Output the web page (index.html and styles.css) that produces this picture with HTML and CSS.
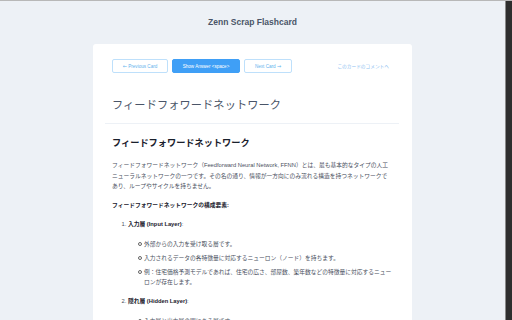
FILE: index.html
```html
<!DOCTYPE html>
<html lang="ja">
<head>
  <meta charset="UTF-8" />
  <title>Zenn Scrap Flashcard</title>
  <link rel="stylesheet" href="styles.css">
</head>
<body>
  <div class="page">
    <h1 class="site-title">Zenn Scrap Flashcard</h1>
    <main class="card">
      <header class="card-head">
        <nav class="actions">
          <button class="btn"><span class="arrow">←</span> Previous Card</button>
          <button class="btn btn-primary">Show Answer &lt;space&gt;</button>
          <button class="btn btn-next">Next Card <span class="arrow">→</span></button>
          <a class="comment-link" href="#">このカードのコメントへ</a>
        </nav>
        <h2 class="card-title">フィードフォワードネットワーク</h2>
      </header>
      <article class="card-body">
        <h3>フィードフォワードネットワーク</h3>
        <p>フィードフォワードネットワーク（Feedforward Neural Network, FFNN）とは、最も基本的なタイプの人工ニューラルネットワークの一つです。その名の通り、情報が一方向にのみ流れる構造を持つネットワークであり、ループやサイクルを持ちません。</p>
        <p class="lead"><strong>フィードフォワードネットワークの構成要素:</strong></p>
        <ol>
          <li>
            <strong>入力層 (Input Layer)</strong>:
            <ul>
              <li>外部からの入力を受け取る層です。</li>
              <li>入力されるデータの各特徴量に対応するニューロン（ノード）を持ちます。</li>
              <li>例：住宅価格予測モデルであれば、住宅の広さ、部屋数、築年数などの特徴量に対応するニューロンが存在します。</li>
            </ul>
          </li>
          <li>
            <strong>隠れ層 (Hidden Layer)</strong>:
            <ul>
              <li>入力層と出力層の間にある層です。</li>
            </ul>
          </li>
        </ol>
      </article>
    </main>
  </div>
  <div class="scrollbar"></div>
</body>
</html>
```

FILE: styles.css
```css
body {
  margin: 0;
  height: 320px;
  overflow: hidden;
  display: flex;
  background: #edf1f6;
  border-top: 1px solid #b8b8b8;
  box-sizing: border-box;
  font-family: "Liberation Sans", "Noto Sans CJK JP", sans-serif;
  color: #4a5568;
}
.page {
  flex: 1;
  display: flex;
  flex-direction: column;
  align-items: center;
}
.scrollbar {
  width: 6px;
  background: #2e2e2e;
  border-left: 1px solid #8a8a8a;
}
.site-title {
  margin: 0;
  height: 43px;
  line-height: 43px;
  font-size: 8.5px;
  font-weight: 700;
  color: #4a5568;
}
.card {
  width: 319px;
  flex: 1;
  background: #fff;
  border-radius: 3px 3px 0 0;
  padding: 15px 13px 0 12px;
  box-sizing: border-box;
}
.card-head {
  padding: 0 7px 11px;
  border-bottom: 1px solid #edf1f6;
}
.actions {
  display: flex;
  align-items: center;
  gap: 4px;
}
.btn {
  height: 14px;
  width: 56px;
  padding: 0;
  font-family: "Liberation Sans", sans-serif;
  font-size: 4.6px;
  color: #63b3ed;
  background: #fff;
  border: 1px solid #bee0fb;
  border-radius: 2px;
}
.btn .arrow {
  font-family: "DejaVu Sans", sans-serif;
  font-size: 5px;
}
.btn-primary {
  width: 68px;
  color: #fff;
  background: #3f9ff6;
  border-color: #3f9ff6;
}
.btn-next {
  width: 48px;
}
.comment-link {
  margin-left: auto;
  margin-right: 3px;
  font-size: 4.7px;
  color: #8dc1f1;
  text-decoration: none;
}
.card-title {
  margin: 25px 0 0;
  font-size: 11.2px;
  line-height: 14px;
  font-weight: 400;
  letter-spacing: 0.1px;
  color: #4a5568;
}
.card-body {
  padding: 0 7px;
  font-size: 5.75px;
  line-height: 10.5px;
  color: #4a5060;
}
.card-body h3 {
  margin: 13px 0 0;
  font-size: 9.2px;
  line-height: 12px;
  font-weight: 700;
  color: #1a202c;
}
.card-body p {
  margin: 11px 0 0;
}
.card-body p.lead {
  margin-top: 8px;
}
.card-body strong {
  color: #1a202c;
}
.card-body ol {
  margin: 9px 0 0;
  padding-left: 16px;
}
.card-body ol > li {
  margin-bottom: 9.5px;
}
.card-body ul {
  margin: 9px 0 0;
  padding: 0;
  list-style: none;
}
.card-body ul li {
  position: relative;
  padding-left: 16px;
  line-height: 10px;
  margin-bottom: 4px;
}
.card-body ul li::before {
  content: "";
  position: absolute;
  left: 9.5px;
  top: 3.8px;
  width: 2.2px;
  height: 2.2px;
  border: 0.7px solid #666;
  border-radius: 50%;
}
```
